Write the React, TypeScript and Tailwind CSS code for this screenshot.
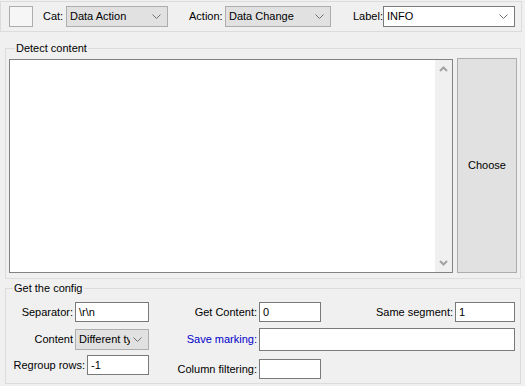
import React from 'react';

// small "v" arrow used by the combo boxes
const Chevron = () => (
  <svg width="9" height="5" viewBox="0 0 9 5" className="shrink-0">
    <polyline points="0.5,0.5 4.5,4.5 8.5,0.5" fill="none" stroke="#707070" strokeWidth="1" />
  </svg>
);

const ScrollArrow = ({ up }: { up?: boolean }) => (
  <svg width="9" height="6" viewBox="0 0 9 6">
    <polyline
      points={up ? '1,5 4.5,1.5 8,5' : '1,1 4.5,4.5 8,1'}
      fill="none"
      stroke="#a3a3a3"
      strokeWidth="2"
    />
  </svg>
);

function Combo({ value, width, white }: { value: string; width: string; white?: boolean }) {
  return (
    <div
      className={`${width} h-[21px] flex items-center justify-between pl-[3px] pr-[6px] border ${
        white ? 'bg-white border-[#7a7a7a]' : 'bg-[#e1e1e1] border-[#adadad]'
      }`}
    >
      <span className="whitespace-nowrap overflow-hidden flex-1 min-w-0 mr-[3px]">{value}</span>
      <Chevron />
    </div>
  );
}

function Field({ value = '', width, className = '' }: { value?: string; width: string; className?: string }) {
  return (
    <div className={`${width} h-[20px] bg-white border border-[#7a7a7a] flex items-center pl-[3px] ${className}`}>
      {value}
    </div>
  );
}

export default function App() {
  return (
    <div
      className="w-[525px] h-[386px] bg-[#f0f0f0] text-[11px] text-black overflow-hidden pt-[1px]"
      style={{ fontFamily: '"Liberation Sans", Arial, sans-serif' }}
    >
      {/* Top toolbar */}
      <div className="mr-[3px] h-[31px] border border-[#dcdcdc] flex items-center pl-[8px]">
        <div className="w-[24px] h-[21px] bg-[#f6f6f6] border border-[#adadad]" />
        <span className="ml-[10px] w-[23px] whitespace-nowrap">Cat:</span>
        <Combo value="Data Action" width="w-[102px]" />
        <span className="ml-[21px] w-[36px] whitespace-nowrap">Action:</span>
        <Combo value="Data Change" width="w-[106px]" />
        <span className="ml-[22px] w-[30px] whitespace-nowrap">Label:</span>
        <Combo value="INFO" width="w-[132px]" white />
      </div>

      {/* Detect content */}
      <fieldset className="ml-[5px] mr-[4px] mt-[10px] border border-[#dcdcdc] px-[3px] pt-[4px] pb-[5px]">
        <legend className="ml-[6px] px-[1px] leading-[12px]">Detect content</legend>
        <div className="flex gap-[4px] items-start">
          <div className="w-[444px] h-[214px] mt-[1px] bg-white border border-[#828282] flex justify-end">
            <div className="w-[17px] h-full bg-[#f0f0f0] flex flex-col items-center justify-between py-[6px]">
              <ScrollArrow up />
              <ScrollArrow />
            </div>
          </div>
          <div className="w-[60px] h-[215px] bg-[#e1e1e1] border border-[#adadad] flex items-center justify-center">
            Choose
          </div>
        </div>
      </fieldset>

      {/* Get the config */}
      <fieldset className="ml-[5px] mr-[4px] mt-[3px] border border-[#dcdcdc] pl-[1px] pr-[5px] pt-[8px] pb-[5px]">
        <legend className="ml-[6px] px-[1px] leading-[12px]">Get the config</legend>
        <div className="flex flex-col gap-[7px]">
          <div className="flex items-center h-[20px]">
            <div className="w-[142px] flex items-center justify-end gap-[2px]">
              <span>Separator:</span>
              <Field value="\r\n" width="w-[74px]" />
            </div>
            <div className="w-[172px] flex items-center justify-end gap-[2px]">
              <span>Get Content:</span>
              <Field value="0" width="w-[62px]" />
            </div>
            <div className="flex-1 flex items-center justify-end gap-[2px]">
              <span>Same segment:</span>
              <Field value="1" width="w-[60px]" />
            </div>
          </div>
          <div className="flex items-center h-[21px]">
            <div className="w-[142px] flex items-center justify-end gap-[2px]">
              <span>Content</span>
              <Combo value="Different type" width="w-[74px]" />
            </div>
            <div className="w-[108px] flex justify-end text-[#0000cc]">Save marking:</div>
            <Field width="flex-1 ml-[2px] h-[23px]" />
          </div>
          <div className="flex items-start h-[23px] -mt-[2px]">
            <div className="w-[142px] flex items-center justify-end gap-[2px]">
              <span>Regroup rows:</span>
              <Field value="-1" width="w-[62px]" />
            </div>
            <div className="w-[172px] flex items-center justify-end gap-[2px] mt-[4px]">
              <span>Column filtering:</span>
              <Field width="w-[62px]" />
            </div>
          </div>
        </div>
      </fieldset>
    </div>
  );
}
